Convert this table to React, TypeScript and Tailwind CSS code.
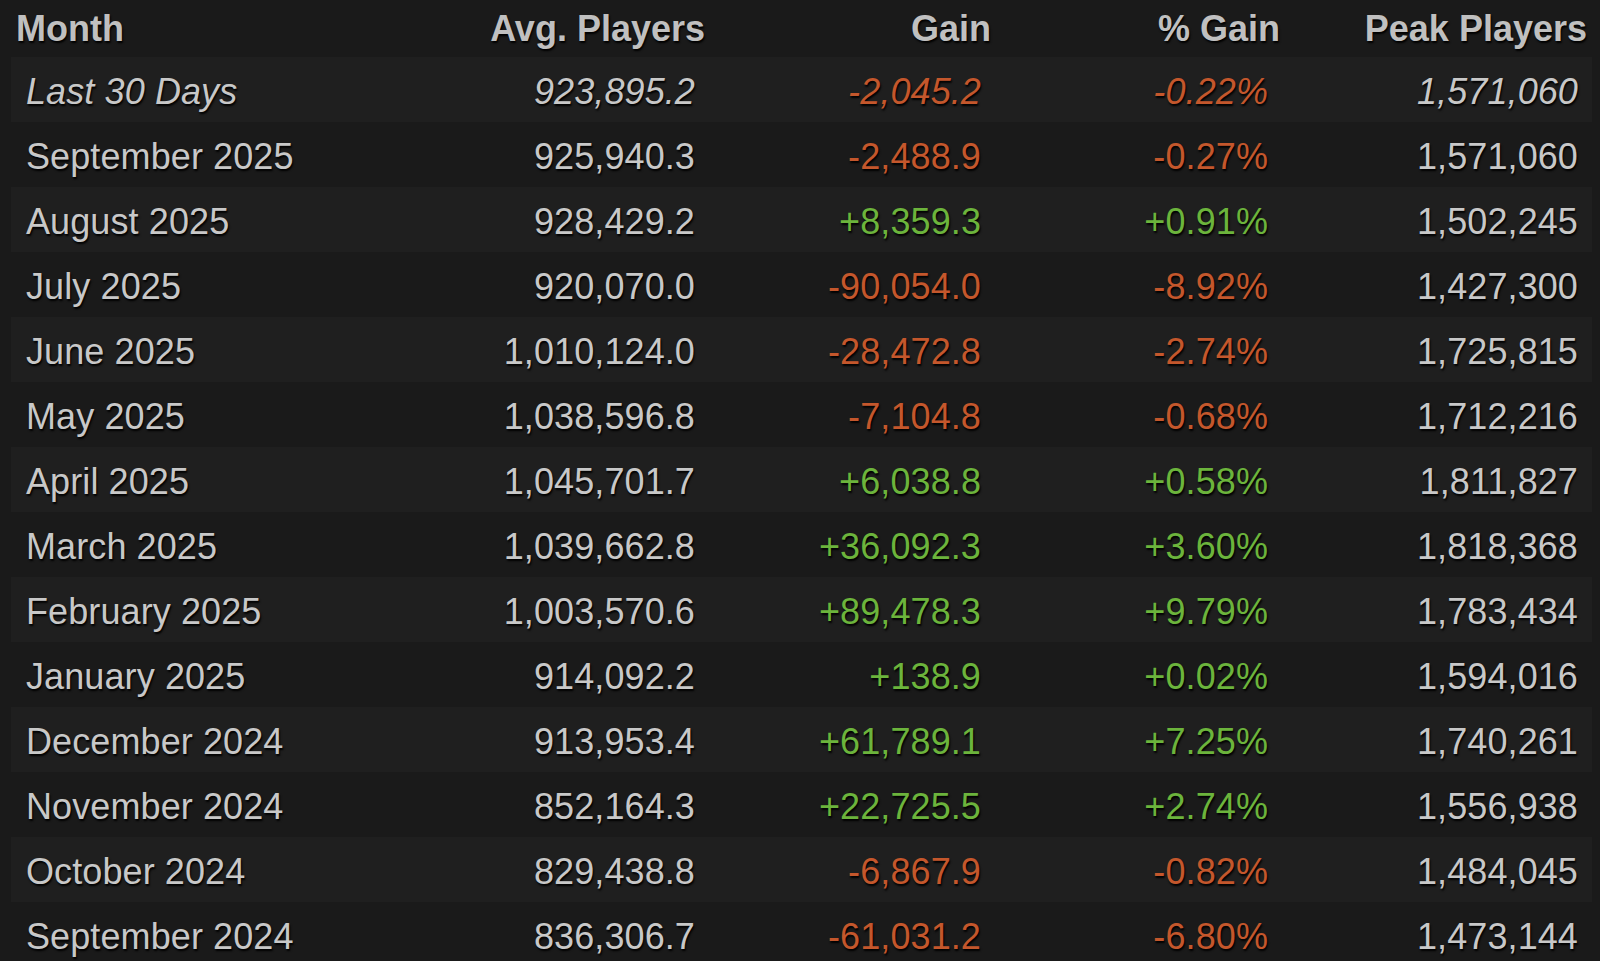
const rows = [
  { month: 'Last 30 Days', avg: '923,895.2', gain: '-2,045.2', pct: '-0.22%', peak: '1,571,060', recent: true },
  { month: 'September 2025', avg: '925,940.3', gain: '-2,488.9', pct: '-0.27%', peak: '1,571,060' },
  { month: 'August 2025', avg: '928,429.2', gain: '+8,359.3', pct: '+0.91%', peak: '1,502,245' },
  { month: 'July 2025', avg: '920,070.0', gain: '-90,054.0', pct: '-8.92%', peak: '1,427,300' },
  { month: 'June 2025', avg: '1,010,124.0', gain: '-28,472.8', pct: '-2.74%', peak: '1,725,815' },
  { month: 'May 2025', avg: '1,038,596.8', gain: '-7,104.8', pct: '-0.68%', peak: '1,712,216' },
  { month: 'April 2025', avg: '1,045,701.7', gain: '+6,038.8', pct: '+0.58%', peak: '1,811,827' },
  { month: 'March 2025', avg: '1,039,662.8', gain: '+36,092.3', pct: '+3.60%', peak: '1,818,368' },
  { month: 'February 2025', avg: '1,003,570.6', gain: '+89,478.3', pct: '+9.79%', peak: '1,783,434' },
  { month: 'January 2025', avg: '914,092.2', gain: '+138.9', pct: '+0.02%', peak: '1,594,016' },
  { month: 'December 2024', avg: '913,953.4', gain: '+61,789.1', pct: '+7.25%', peak: '1,740,261' },
  { month: 'November 2024', avg: '852,164.3', gain: '+22,725.5', pct: '+2.74%', peak: '1,556,938' },
  { month: 'October 2024', avg: '829,438.8', gain: '-6,867.9', pct: '-0.82%', peak: '1,484,045' },
  { month: 'September 2024', avg: '836,306.7', gain: '-61,031.2', pct: '-6.80%', peak: '1,473,144' }
];

function tone(value: string) {
  return value.startsWith('-') ? 'text-[#c4572c]' : 'text-[#6cb43c]';
}

export default function App() {
  return (
    <div className="min-h-screen overflow-hidden bg-[#1a1a1a] font-['Liberation_Sans',Arial,sans-serif] text-[#c8c8c8] [text-shadow:1px_2px_2px_#000]">
      <div className="grid h-[57px] grid-cols-[404px_285px_286px_289px_307px] items-center pl-[16px] text-[36px] font-bold text-[#c0c0c0]">
        <div>Month</div>
        <div className="text-right">Avg. Players</div>
        <div className="text-right">Gain</div>
        <div className="text-right">% Gain</div>
        <div className="text-right">Peak Players</div>
      </div>
      <div className="ml-[11px] w-[1581px]">
        {rows.map((row, i) => (
          <div
            key={row.month}
            className={`grid h-[65px] grid-cols-[394px_275px_286px_287px_310px] items-center pl-[15px] pt-[4px] text-[36px] tracking-[0.1px] ${
              i % 2 === 0 ? 'bg-[#1f1f1f]' : 'bg-[#1a1a1a]'
            } ${row.recent ? 'italic' : ''}`}
          >
            <div>{row.month}</div>
            <div className="text-right">{row.avg}</div>
            <div className={`text-right ${tone(row.gain)}`}>{row.gain}</div>
            <div className={`text-right ${tone(row.pct)}`}>{row.pct}</div>
            <div className="text-right">{row.peak}</div>
          </div>
        ))}
      </div>
    </div>
  );
}
